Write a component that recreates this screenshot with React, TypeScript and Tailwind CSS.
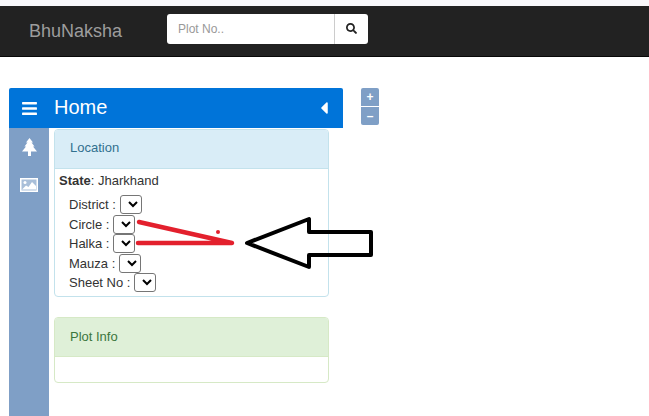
import { FaBars, FaCaretLeft, FaSearch } from 'react-icons/fa'

const rows = ['District :', 'Circle :', 'Halka :', 'Mauza :', 'Sheet No :']

function Row({ label }: { label: string }) {
  return (
    <div className="flex items-center h-[19.5px]">
      <span className="text-[13px] text-[#333]">{label}</span>
      <select className="ml-[4px] w-[22px] h-[19px] border border-[#767676] rounded-[3px] bg-white text-[13px]"></select>
    </div>
  )
}

export default function App() {
  return (
    <div className="relative h-screen overflow-hidden bg-white font-['Liberation_Sans',Arial,sans-serif]">
      <div className="h-[6px] bg-[#f8f8fb]" />
      <nav className="h-[51px] bg-[#222] border-b border-[#080808] flex items-center pl-[29px]">
        <span className="w-[138px] text-[18px] text-[#9d9d9d]">BhuNaksha</span>
        <div className="flex h-[30px] w-[201px] -mt-[5px] bg-white rounded-[3px]">
          <div className="flex-1 flex items-center pl-[11px] text-[12px] text-[#999] border-r border-[#ccc]">Plot No..</div>
          <div className="w-[33px] flex items-center justify-center text-[#222]">
            <FaSearch className="w-[11px] h-[11px] -ml-[1px] -mt-[1px]" />
          </div>
        </div>
      </nav>

      <div className="flex items-start mt-[31px] ml-[9px]">
        <div className="w-[334px]">
          <div className="h-[40px] bg-[#0074d9] rounded-t-[2px] flex items-center text-white">
            <FaBars className="ml-[13px] w-[15px] h-[17px]" />
            <span className="ml-[17px] text-[20px] leading-[24px] -mt-[2px] flex-1">Home</span>
            <FaCaretLeft className="mr-[9px] w-[20px] h-[20px] -mt-[1px]" />
          </div>
          <div className="flex h-[300px]">
            <div className="w-[40px] bg-[#7f9fc6] flex flex-col items-center text-white pt-[10px] gap-[23px]">
              <svg width="15" height="18" viewBox="0 0 15 18" fill="#fff">
                <path d="M7.5 0 L11 4.5 H9.5 L12.5 8.5 H11 L15 13.5 H9 V18 H6 V13.5 H0 L4 8.5 H2.5 L5.5 4.5 H4 Z" />
              </svg>
              <svg width="18" height="14" viewBox="0 0 18 14" className="-mt-[1px]">
                <rect x="0.75" y="0.75" width="16.5" height="12.5" fill="#a9bfd9" stroke="#fff" strokeWidth="1.5" />
                <circle cx="5" cy="4.5" r="1.5" fill="#fff" />
                <path d="M2 11.5 L6 7.5 L8.5 9 L12 4 L16 8 V11.5 Z" fill="#fff" />
              </svg>
            </div>
            <div className="ml-[5px] w-[275px] pt-[1px]">
              <section className="h-[168px] border border-[#c3e2ec] rounded-[4px] overflow-hidden">
                <h3 className="h-[39px] bg-[#d9edf7] border-b border-[#c3e2ec] flex items-center pl-[15px] pb-[2px] text-[13px] text-[#31708f]">Location</h3>
                <div className="px-[4px] pt-[4px]">
                  <p className="text-[13px] leading-[16px] text-[#333]"><b>State</b>: Jharkhand</p>
                  <div className="ml-[10px] mt-[6px]">
                    {rows.map(r => <Row key={r} label={r} />)}
                  </div>
                </div>
              </section>
              <section className="mt-[20px] h-[66px] border border-[#d6e9c6] rounded-[4px] overflow-hidden">
                <h3 className="h-[39px] bg-[#dff0d8] border-b border-[#d6e9c6] flex items-center pl-[15px] text-[13px] text-[#3c763d]">Plot Info</h3>
              </section>
            </div>
          </div>
        </div>
        <div className="ml-[18px] w-[18px] flex flex-col gap-[1px] text-white font-bold text-[12px]">
          <div className="h-[18px] bg-[#7f9fc6] rounded-t-[2px] flex items-center justify-center">+</div>
          <div className="h-[18px] bg-[#7f9fc6] rounded-b-[2px] flex items-center justify-center">–</div>
        </div>
      </div>

      <svg className="absolute left-0 top-0 pointer-events-none" width="649" height="416" fill="none" strokeLinecap="round" strokeLinejoin="round">
        <path d="M139 222 L232 243 L138 243" stroke="#e3202d" strokeWidth="4.5" />
        <circle cx="218" cy="232" r="2" fill="#e3202d" />
        <path d="M247 243 L309 219 L309 232 L371 232 L371 255 L309 255 L309 267 Z" stroke="#000" strokeWidth="4" />
      </svg>
    </div>
  )
}
